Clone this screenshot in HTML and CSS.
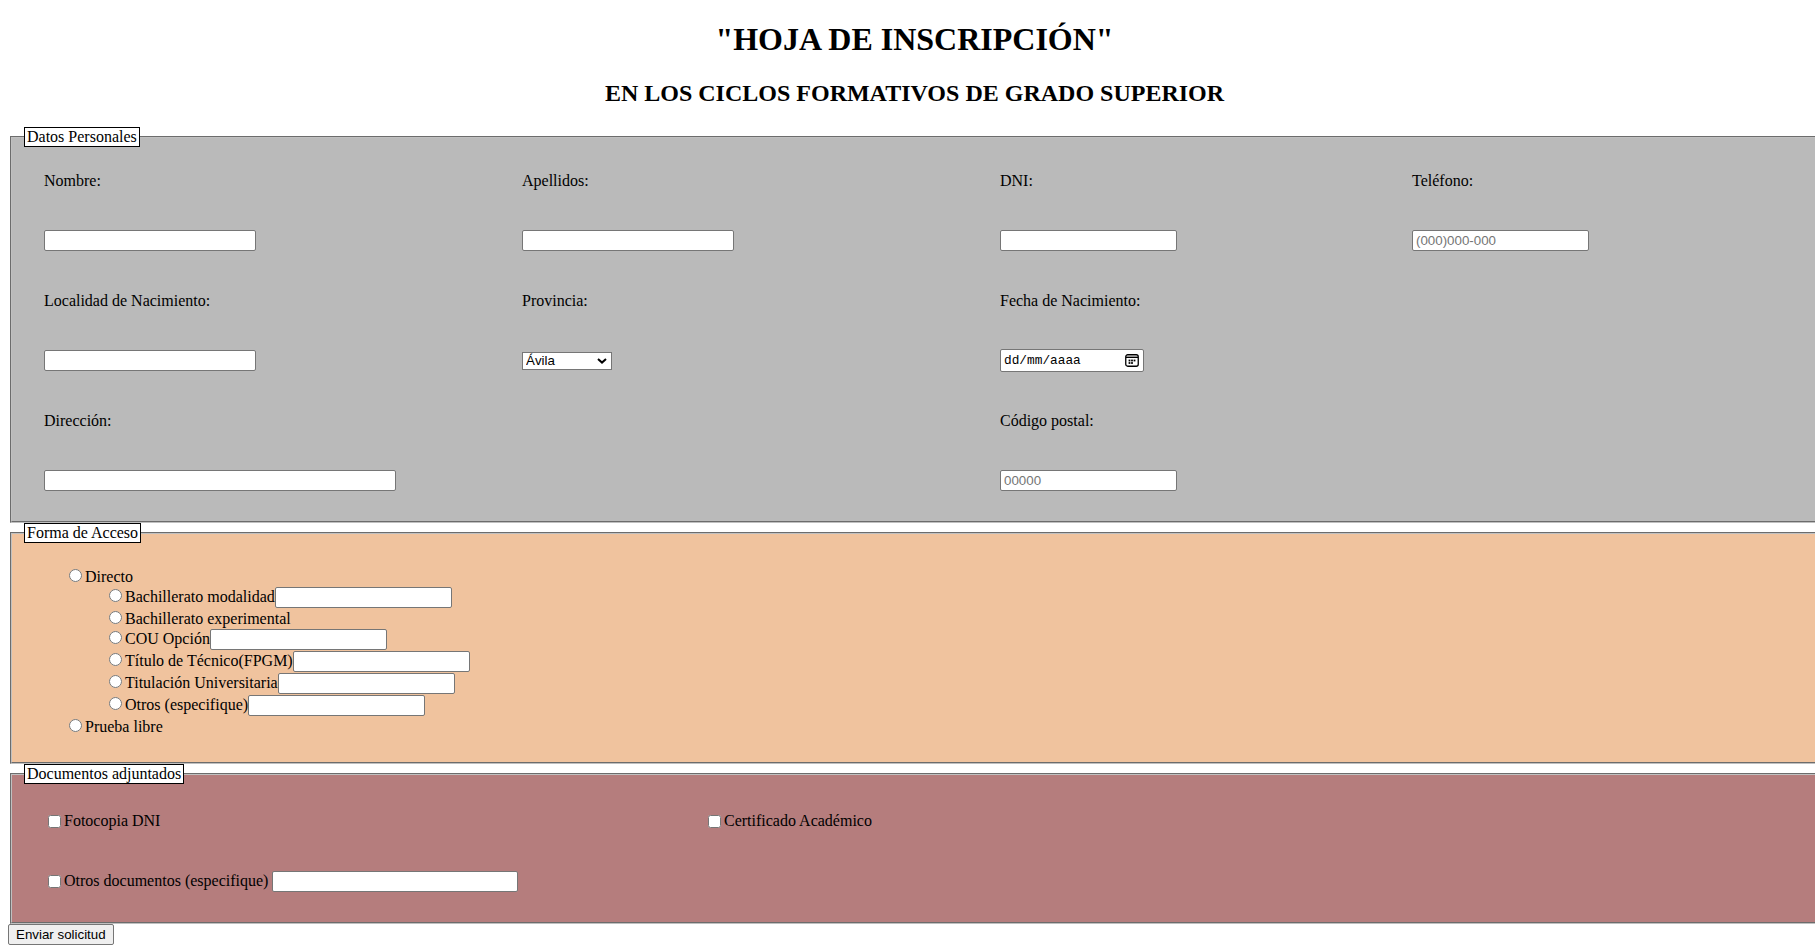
FILE: index.html
```html
<!DOCTYPE html>
<html lang="es">
<head>
<meta charset="utf-8">
<title>Hoja de inscripción</title>
<link rel="stylesheet" href="styles.css">
</head>
<body>
<h1 class="title">"HOJA DE INSCRIPCIÓN"</h1>
<h2 class="subtitle">EN LOS CICLOS FORMATIVOS DE GRADO SUPERIOR</h2>
<form class="form">
  <fieldset class="fs fs-personal">
    <legend class="lg">Datos Personales</legend>
    <div class="grid-personal">
      <div class="cell">Nombre:</div>
      <div class="cell">Apellidos:</div>
      <div class="cell">DNI:</div>
      <div class="cell">Teléfono:</div>

      <div class="cell"><input class="txt w212" type="text"></div>
      <div class="cell"><input class="txt w212" type="text"></div>
      <div class="cell"><input class="txt" type="text"></div>
      <div class="cell"><input class="txt" type="text" placeholder="(000)000-000"></div>

      <div class="cell">Localidad de Nacimiento:</div>
      <div class="cell">Provincia:</div>
      <div class="cell">Fecha de Nacimiento:</div>
      <div class="cell"></div>

      <div class="cell"><input class="txt w212" type="text"></div>
      <div class="cell">
        <span class="select-wrap">
          <select class="sel">
            <option>Ávila</option>
            <option>Burgos</option>
            <option>León</option>
            <option>Palencia</option>
            <option>Salamanca</option>
            <option>Segovia</option>
            <option>Soria</option>
            <option>Valladolid</option>
            <option>Zamora</option>
          </select>
          <svg class="chev" width="10" height="6" viewBox="0 0 10 6"><path d="M1 1 L5 4.6 L9 1" fill="none" stroke="#000" stroke-width="2"/></svg>
        </span>
      </div>
      <div class="cell">
        <span class="date">
          <span class="date-text">dd/mm/aaaa</span>
          <svg class="cal" width="14" height="13" viewBox="0 0 14 13">
            <rect x="0.75" y="0.75" width="12.5" height="11.5" rx="2" fill="none" stroke="#000" stroke-width="1.3"/>
            <rect x="1" y="2.6" width="12" height="1.4" fill="#000"/>
            <rect x="3.6" y="5.6" width="1.8" height="1.8" fill="#000"/>
            <rect x="6.1" y="5.6" width="1.8" height="1.8" fill="#000"/>
            <rect x="8.6" y="5.6" width="1.8" height="1.8" fill="#000"/>
            <rect x="3.6" y="8.1" width="1.8" height="1.8" fill="#000"/>
            <rect x="6.1" y="8.1" width="1.8" height="1.8" fill="#000"/>
          </svg>
        </span>
      </div>
      <div class="cell"></div>

      <div class="cell">Dirección:</div>
      <div class="cell"></div>
      <div class="cell">Código postal:</div>
      <div class="cell"></div>

      <div class="cell span2"><input class="txt w352" type="text"></div>
      <div class="cell"><input class="txt" type="text" placeholder="00000"></div>
      <div class="cell"></div>
    </div>
  </fieldset>

  <fieldset class="fs fs-acceso">
    <legend class="lg">Forma de Acceso</legend>
    <ul class="opts">
      <li><input class="rad" type="radio" name="acceso">Directo
        <ul class="opts sub">
          <li><input class="rad" type="radio" name="directo">Bachillerato modalidad<input class="txt" type="text"></li>
          <li><input class="rad" type="radio" name="directo">Bachillerato experimental</li>
          <li><input class="rad" type="radio" name="directo">COU Opción<input class="txt" type="text"></li>
          <li><input class="rad" type="radio" name="directo">Título de Técnico(FPGM)<input class="txt" type="text"></li>
          <li><input class="rad" type="radio" name="directo">Titulación Universitaria<input class="txt" type="text"></li>
          <li><input class="rad" type="radio" name="directo">Otros (especifique)<input class="txt" type="text"></li>
        </ul>
      </li>
      <li><input class="rad" type="radio" name="acceso">Prueba libre</li>
    </ul>
  </fieldset>

  <fieldset class="fs fs-docs">
    <legend class="lg">Documentos adjuntados</legend>
    <div class="grid-docs">
      <div class="cell"><label><input class="chk" type="checkbox">Fotocopia DNI</label></div>
      <div class="cell"><label><input class="chk" type="checkbox">Certificado Académico</label></div>
      <div class="cell"><label><input class="chk" type="checkbox">Otros documentos (especifique)</label><input class="txt w246 gap" type="text"></div>
      <div class="cell"></div>
    </div>
  </fieldset>
  <button class="btn" type="button">Enviar solicitud</button>
</form>
</body>
</html>
```

FILE: styles.css
```css
body {
  margin: 0 0 8px 8px;
  font-family: "Liberation Serif", "Times New Roman", serif;
  font-size: 16px;
  color: #000;
  background: #fff;
}

.title {
  font-size: 32px;
  font-weight: bold;
  text-align: center;
  margin: 21.44px 0;
  padding-left: 6px;
}

.subtitle {
  font-size: 24px;
  font-weight: bold;
  text-align: center;
  margin: 19.92px 0;
  padding-left: 6px;
}

.form {
  margin: 0;
}

.fs {
  margin: 0 0 0 2px;
  padding: 4px 12px 10px;
  border: 2px groove #c0c0c0;
  border-right: none;
  min-width: 0;
}

.fs-personal {
  background: #bababa;
}

.fs-acceso {
  background: #f0c39e;
}

.fs-docs {
  background: #b57d7d;
}

.lg {
  background: #fff;
  border: 1px solid #000;
  padding: 0 2px;
  font-size: 16px;
  line-height: 18px;
}

.grid-personal {
  display: grid;
  grid-template-columns: 478px 478px 412px 1fr;
  grid-auto-rows: 60px;
  padding-left: 20px;
}

.grid-docs {
  display: grid;
  grid-template-columns: 660px 1fr;
  grid-auto-rows: 60px;
  padding: 4px 0 0 20px;
}

.cell {
  display: flex;
  align-items: center;
  white-space: nowrap;
}

.span2 {
  grid-column: span 2;
}

.txt {
  box-sizing: border-box;
  width: 177px;
  height: 21px;
  margin: 0;
  padding: 1px 3px;
  border: 1px solid #767676;
  border-radius: 2px;
  background: #fff;
  font-family: "Liberation Sans", Arial, sans-serif;
  font-size: 13.33px;
  color: #000;
  vertical-align: baseline;
}

.txt::placeholder {
  color: #757575;
}

.w212 {
  width: 212px;
}

.w352 {
  width: 352px;
}

.w246 {
  width: 246px;
}

.gap {
  margin-left: 4px;
}

.select-wrap {
  position: relative;
  display: inline-block;
}

.sel {
  -webkit-appearance: none;
  appearance: none;
  box-sizing: border-box;
  width: 90px;
  height: 18px;
  margin: 0;
  padding: 0 0 0 3px;
  border: 1px solid #767676;
  border-radius: 0;
  background: #fff;
  font-family: "Liberation Sans", Arial, sans-serif;
  font-size: 13.33px;
  line-height: 16px;
  color: #000;
  display: block;
}

.chev {
  position: absolute;
  right: 5px;
  top: 6px;
  pointer-events: none;
}

.date {
  box-sizing: border-box;
  display: inline-flex;
  align-items: center;
  justify-content: space-between;
  width: 144px;
  height: 23px;
  padding: 0 4px 0 3px;
  border: 1px solid #767676;
  border-radius: 2px;
  background: #fff;
}

.date-text {
  font-family: "Liberation Mono", "Courier New", monospace;
  font-size: 12.8px;
  color: #000;
}

.cal {
  display: block;
}

.opts {
  list-style: none;
  margin: 19px 0 16px;
  padding-left: 40px;
}

.opts.sub {
  margin: 0;
}

.rad {
  width: 13px;
  height: 13px;
  margin: 3px 3px 0 5px;
}

.chk {
  width: 13px;
  height: 13px;
  margin: 3px 3px 3px 4px;
  vertical-align: -2px;
}

.btn {
  box-sizing: border-box;
  margin: 0;
  height: 21px;
  padding: 1px 7px;
  border: 1px solid #767676;
  border-radius: 2px;
  background: #efefef;
  font-family: "Liberation Sans", Arial, sans-serif;
  font-size: 13.33px;
  color: #000;
}
```
